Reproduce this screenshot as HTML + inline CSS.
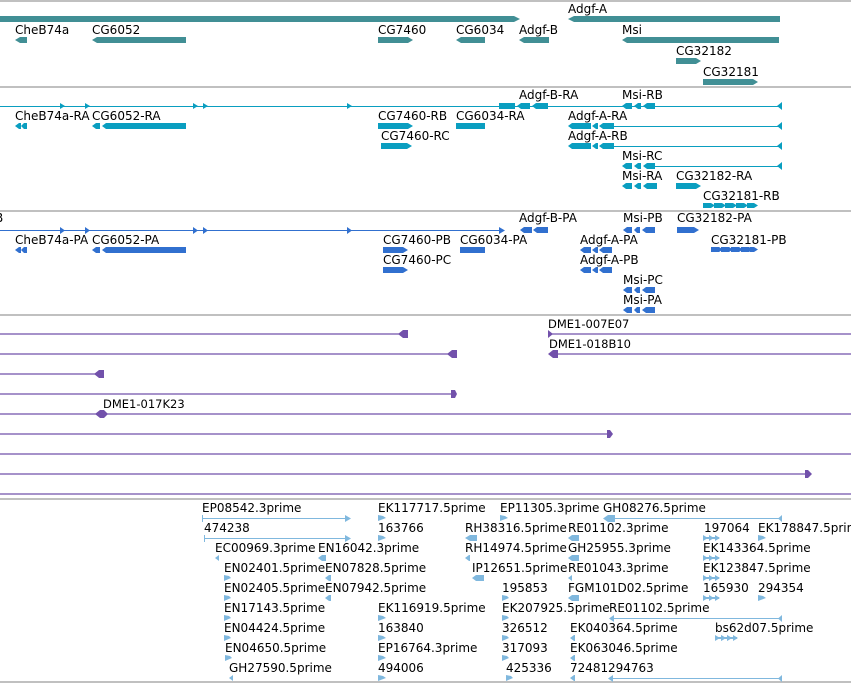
<!DOCTYPE html>
<html><head><meta charset="utf-8"><style>
html,body{margin:0;padding:0;background:#fff;}
svg{display:block;}
text{font-family:"DejaVu Sans","Liberation Sans",sans-serif;font-size:12px;fill:#000;}
</style></head><body>
<svg width="851" height="683" viewBox="0 0 851 683" xmlns="http://www.w3.org/2000/svg">
<g fill="none" stroke="#c0c0c0" stroke-width="2">
<line x1="0" y1="1" x2="851" y2="1"/><line x1="0" y1="87" x2="851" y2="87"/>
<line x1="0" y1="211" x2="851" y2="211"/><line x1="0" y1="315" x2="851" y2="315"/>
<line x1="0" y1="499" x2="851" y2="499"/><line x1="0" y1="682" x2="851" y2="682"/>
</g>

<!-- Track 1 -->
<g fill="#418f95">
<polygon points="0,16 514,16 520,19 514,22 0,22"/>
<polygon points="568,19 574,16 780,16 780,22 574,22"/>
<polygon points="15,40 20,37 27,37 27,43 20,43"/>
<polygon points="92,40 97,37 186,37 186,43 97,43"/>
<polygon points="378,37 408,37 413,40 408,43 378,43"/>
<polygon points="456,40 461,37 485,37 485,43 461,43"/>
<polygon points="519,40 524,37 549,37 549,43 524,43"/>
<polygon points="622,40 627,37 779,37 779,43 627,43"/>
<polygon points="676,58 696,58 701,61 696,64 676,64"/>
<polygon points="703,79 753,79 758,82 753,85 703,85"/>
</g>
<text x="568" y="13">Adgf-A</text>
<text x="15" y="34">CheB74a</text><text x="92" y="34">CG6052</text><text x="378" y="34">CG7460</text>
<text x="456" y="34">CG6034</text><text x="519" y="34">Adgf-B</text><text x="622" y="34">Msi</text>
<text x="676" y="55">CG32182</text><text x="703" y="76">CG32181</text>

<!-- Track 2 -->
<g stroke="#0a9ec0" stroke-width="1">
<line x1="0" y1="106.5" x2="782" y2="106.5"/>
<line x1="614" y1="126.5" x2="782" y2="126.5"/>
<line x1="614" y1="146.5" x2="782" y2="146.5"/>
<line x1="655" y1="166.5" x2="782" y2="166.5"/>
</g>
<g fill="#0a9ec0">
<polygon points="60,103 65,106 60,109"/><polygon points="85,103 90,106 85,109"/><polygon points="193,103 198,106 193,109"/><polygon points="203,103 208,106 203,109"/><polygon points="347,103 352,106 347,109"/>
<rect x="499" y="103" width="16" height="6"/>
<polygon points="517,106 521,103 530,103 530,109 521,109"/><polygon points="532,106 536,103 548,103 548,109 536,109"/>
<polygon points="622,106 626,103 632,103 632,109 626,109"/><polygon points="634,106 638,103 641,103 641,109 638,109"/><polygon points="643,106 647,103 655,103 655,109 647,109"/>
<polygon points="777,106 782,102 782,110"/><polygon points="777,126 782,122 782,130"/><polygon points="777,146 782,142 782,150"/><polygon points="777,166 782,162 782,170"/>
<polygon points="15,126 19,123 21,123 21,129 19,129"/><polygon points="21,126 24,123 27,123 27,129 24,129"/>
<polygon points="92,126 96,123 100,123 100,129 96,129"/><polygon points="102,126 106,123 186,123 186,129 106,129"/>
<polygon points="378,123 408,123 413,126 408,129 378,129"/>
<rect x="456" y="123" width="29" height="6"/>
<polygon points="568,126 572,123 591,123 591,129 572,129"/><polygon points="592,126 596,123 598,123 598,129 596,129"/><polygon points="599,126 603,123 614,123 614,129 603,129"/>
<polygon points="381,143 407,143 412,146 407,149 381,149"/>
<polygon points="568,146 572,143 591,143 591,149 572,149"/><polygon points="592,146 596,143 598,143 598,149 596,149"/><polygon points="599,146 603,143 614,143 614,149 603,149"/>
<polygon points="622,166 626,163 632,163 632,169 626,169"/><polygon points="634,166 638,163 641,163 641,169 638,169"/><polygon points="643,166 647,163 655,163 655,169 647,169"/>
<polygon points="622,186 626,183 632,183 632,189 626,189"/><polygon points="634,186 638,183 641,183 641,189 638,189"/><polygon points="643,186 647,183 657,183 657,189 647,189"/>
<polygon points="676,183 696,183 701,186 696,189 676,189"/>
<polygon points="703,203 711,203 715,205.5 711,208 703,208"/><polygon points="714,203 722,203 726,205.5 722,208 714,208"/><polygon points="725,203 733,203 737,205.5 733,208 725,208"/><polygon points="736,203 744,203 748,205.5 744,208 736,208"/><polygon points="747,203 754,203 758,205.5 754,208 747,208"/>
</g>
<text x="519" y="99">Adgf-B-RA</text><text x="622" y="99">Msi-RB</text>
<text x="15" y="120">CheB74a-RA</text><text x="92" y="120">CG6052-RA</text><text x="378" y="120">CG7460-RB</text><text x="456" y="120">CG6034-RA</text><text x="568" y="120">Adgf-A-RA</text>
<text x="381" y="140">CG7460-RC</text><text x="568" y="140">Adgf-A-RB</text>
<text x="622" y="160">Msi-RC</text>
<text x="622" y="180">Msi-RA</text><text x="676" y="180">CG32182-RA</text>
<text x="703" y="200">CG32181-RB</text>

<!-- Track 3 -->
<line x1="0" y1="230.5" x2="500" y2="230.5" stroke="#3170cf" stroke-width="1"/>
<g fill="#3170cf">
<polygon points="499,227 505,230.5 499,234"/>
<polygon points="60,227 65,230.5 60,234"/><polygon points="85,227 90,230.5 85,234"/><polygon points="193,227 198,230.5 193,234"/><polygon points="203,227 208,230.5 203,234"/><polygon points="347,227 352,230.5 347,234"/>
<polygon points="520,230 524,227 532,227 532,233 524,233"/><polygon points="533,230 537,227 548,227 548,233 537,233"/>
<polygon points="623,230 627,227 632,227 632,233 627,233"/><polygon points="634,230 637,227 640,227 640,233 637,233"/><polygon points="642,230 646,227 655,227 655,233 646,233"/>
<polygon points="677,227 694,227 699,230 694,233 677,233"/>
<polygon points="15,250 19,247 21,247 21,253 19,253"/><polygon points="21,250 24,247 27,247 27,253 24,253"/>
<polygon points="92,250 96,247 100,247 100,253 96,253"/><polygon points="102,250 106,247 186,247 186,253 106,253"/>
<polygon points="383,247 403,247 408,250 403,253 383,253"/>
<rect x="460" y="247" width="25" height="6"/>
<polygon points="580,250 584,247 591,247 591,253 584,253"/><polygon points="592,250 596,247 598,247 598,253 596,253"/><polygon points="599,250 603,247 612,247 612,253 603,253"/>
<polygon points="711,247 719,247 723,249.5 719,252 711,252"/><polygon points="721,247 729,247 733,249.5 729,252 721,252"/><polygon points="731,247 739,247 743,249.5 739,252 731,252"/><polygon points="741,247 749,247 753,249.5 749,252 741,252"/><polygon points="750,247 754,247 758,249.5 754,252 750,252"/>
<polygon points="383,267 403,267 408,270 403,273 383,273"/>
<polygon points="580,270 584,267 591,267 591,273 584,273"/><polygon points="592,270 596,267 598,267 598,273 596,273"/><polygon points="599,270 603,267 612,267 612,273 603,273"/>
<polygon points="623,290 627,287 632,287 632,293 627,293"/><polygon points="634,290 637,287 640,287 640,293 637,293"/><polygon points="642,290 646,287 655,287 655,293 646,293"/>
<polygon points="623,310 627,307 632,307 632,313 627,313"/><polygon points="634,310 637,307 640,307 640,313 637,313"/><polygon points="642,310 646,307 655,307 655,313 646,313"/>
</g>
<text x="-5" y="222">B</text><text x="519" y="222">Adgf-B-PA</text><text x="623" y="222">Msi-PB</text><text x="677" y="222">CG32182-PA</text>
<text x="15" y="244">CheB74a-PA</text><text x="92" y="244">CG6052-PA</text><text x="383" y="244">CG7460-PB</text><text x="460" y="244">CG6034-PA</text><text x="580" y="244">Adgf-A-PA</text><text x="711" y="244">CG32181-PB</text>
<text x="383" y="264">CG7460-PC</text><text x="580" y="264">Adgf-A-PB</text>
<text x="623" y="284">Msi-PC</text><text x="623" y="304">Msi-PA</text>

<!-- Track 4 -->
<g stroke="#7251ab" stroke-width="1.2">
<line x1="0" y1="334" x2="400" y2="334"/><line x1="550" y1="334" x2="851" y2="334"/>
<line x1="0" y1="354" x2="450" y2="354"/><line x1="550" y1="354" x2="851" y2="354"/>
<line x1="0" y1="374" x2="96" y2="374"/>
<line x1="0" y1="394" x2="452" y2="394"/>
<line x1="0" y1="414" x2="851" y2="414"/>
<line x1="0" y1="434" x2="608" y2="434"/>
<line x1="0" y1="454" x2="851" y2="454"/>
<line x1="0" y1="474" x2="806" y2="474"/>
<line x1="0" y1="494" x2="851" y2="494"/>
</g>
<g fill="#7251ab">
<polygon points="398,334 403,330 408,330 408,338 403,338"/>
<polygon points="548,330 553,334 548,338"/>
<polygon points="447,354 452,350 457,350 457,358 452,358"/>
<polygon points="548,354 553,350 558,350 558,358 553,358"/>
<polygon points="94,374 99,370 104,370 104,378 99,378"/>
<polygon points="451,390 455,390 457,394 455,398 451,398"/>
<polygon points="95,414 100,410 104,410 108,414 104,418 100,418"/>
<polygon points="607,430 610,430 613,434 610,438 607,438"/>
<polygon points="805,470 808,470 812,474 808,478 805,478"/>
</g>
<text x="548" y="328" style="font-size:11.5px">DME1-007E07</text>
<text x="549" y="348" style="font-size:11.5px">DME1-018B10</text>
<text x="103" y="408" style="font-size:11.5px">DME1-017K23</text>

<!-- Track 5 -->
<g stroke="#80b8de" stroke-width="1">
<line x1="202" y1="518.5" x2="348" y2="518.5"/><line x1="204" y1="538.5" x2="348" y2="538.5"/>
<line x1="606" y1="518.5" x2="782" y2="518.5"/><line x1="612" y1="618.5" x2="782" y2="618.5"/><line x1="611" y1="678.5" x2="782" y2="678.5"/>
</g>
<g fill="#80b8de">
<polygon points="202,515 203,515 203,522 202,522"/><polygon points="345,515 351,518.5 345,522"/>
<polygon points="204,535 205,535 205,542 204,542"/><polygon points="345,535 351,538.5 345,542"/>
<polygon points="603,518.5 608,515 615,515 615,522 608,522"/><polygon points="778,518.5 782,515 782,522"/>
<polygon points="609,618.5 614,615 614,622"/><polygon points="778,618.5 782,615 782,622"/>
<polygon points="608,678.5 613,675 613,682"/><polygon points="778,678.5 782,675 782,682"/>
<polygon points="378,515 383,516 386,518 378,521"/><polygon points="500,515 505,516 508,518 500,521"/>
<polygon points="378,535 383,536 386,538 378,541"/>
<polygon points="758,535 763,536 766,538 758,541"/>
<polygon points="224,575 229,576 231,578 224,581"/><polygon points="224,595 229,596 231,598 224,601"/>
<polygon points="502,595 507,596 509,598 502,601"/><polygon points="758,595 763,596 766,598 758,601"/>
<polygon points="224,615 229,616 231,618 224,621"/><polygon points="378,615 383,616 386,618 378,621"/><polygon points="502,615 507,616 509,618 502,621"/>
<polygon points="224,635 229,636 231,638 224,641"/><polygon points="378,635 383,636 386,638 378,641"/><polygon points="502,635 507,636 509,638 502,641"/>
<polygon points="225,655 230,656 232,658 225,661"/><polygon points="378,655 383,656 386,658 378,661"/><polygon points="502,655 507,656 509,658 502,661"/>
<polygon points="378,675 383,676 386,678 378,681"/><polygon points="506,675 511,676 513,678 506,681"/>
<polygon points="465,538 470,535 477,535 477,541 470,541"/><polygon points="568,538 572,535 579,535 579,541 572,541"/>
<polygon points="215,558 219,555 219,561"/><polygon points="318,558 322,555 326,555 326,561 322,561"/>
<polygon points="465,558 469,555 470,555 470,561 469,561"/><polygon points="568,558 572,555 579,555 579,561 572,561"/>
<polygon points="325,578 329,575 331,575 331,581 329,581"/><polygon points="472,578 476,575 484,575 484,581 476,581"/><polygon points="568,578 572,575 572,581"/>
<polygon points="325,598 329,595 331,595 331,601 329,601"/><polygon points="568,598 572,595 579,595 579,601 572,601"/>
<polygon points="570,638 574,635 575,635 575,641 574,641"/><polygon points="570,658 574,655 575,655 575,661 574,661"/>
<polygon points="229,678 233,675 233,681"/><polygon points="570,678 574,675 575,675 575,681 574,681"/>
<g id="tri"><polygon points="703,535 708,538 703,541"/><polygon points="709,535 714,538 709,541"/><polygon points="715,535 720,538 715,541"/><rect x="703" y="537" width="16" height="2"/></g>
<use href="#tri" y="20"/><use href="#tri" y="40"/><use href="#tri" y="60"/><use href="#tri" x="12" y="100"/><use href="#tri" x="18" y="100"/>
</g>
<text x="202" y="512">EP08542.3prime</text><text x="378" y="512">EK117717.5prime</text><text x="500" y="512">EP11305.3prime</text><text x="603" y="512">GH08276.5prime</text>
<text x="204" y="532">474238</text><text x="378" y="532">163766</text><text x="465" y="532">RH38316.5prime</text><text x="568" y="532">RE01102.3prime</text><text x="704" y="532">197064</text><text x="758" y="532">EK178847.5prime</text>
<text x="215" y="552">EC00969.3prime</text><text x="318" y="552">EN16042.3prime</text><text x="465" y="552">RH14974.5prime</text><text x="568" y="552">GH25955.3prime</text><text x="703" y="552">EK143364.5prime</text>
<text x="224" y="572">EN02401.5prime</text><text x="325" y="572">EN07828.5prime</text><text x="472" y="572">IP12651.5prime</text><text x="568" y="572">RE01043.3prime</text><text x="703" y="572">EK123847.5prime</text>
<text x="224" y="592">EN02405.5prime</text><text x="325" y="592">EN07942.5prime</text><text x="502" y="592">195853</text><text x="568" y="592">FGM101D02.5prime</text><text x="703" y="592">165930</text><text x="758" y="592">294354</text>
<text x="224" y="612">EN17143.5prime</text><text x="378" y="612">EK116919.5prime</text><text x="502" y="612">EK207925.5prime</text><text x="609" y="612">RE01102.5prime</text>
<text x="224" y="632">EN04424.5prime</text><text x="378" y="632">163840</text><text x="502" y="632">326512</text><text x="570" y="632">EK040364.5prime</text><text x="715" y="632">bs62d07.5prime</text>
<text x="225" y="652">EN04650.5prime</text><text x="378" y="652">EP16764.3prime</text><text x="502" y="652">317093</text><text x="570" y="652">EK063046.5prime</text>
<text x="229" y="672">GH27590.5prime</text><text x="378" y="672">494006</text><text x="506" y="672">425336</text><text x="570" y="672">72481</text><text x="608" y="672">294763</text>
</svg>
</body></html>
